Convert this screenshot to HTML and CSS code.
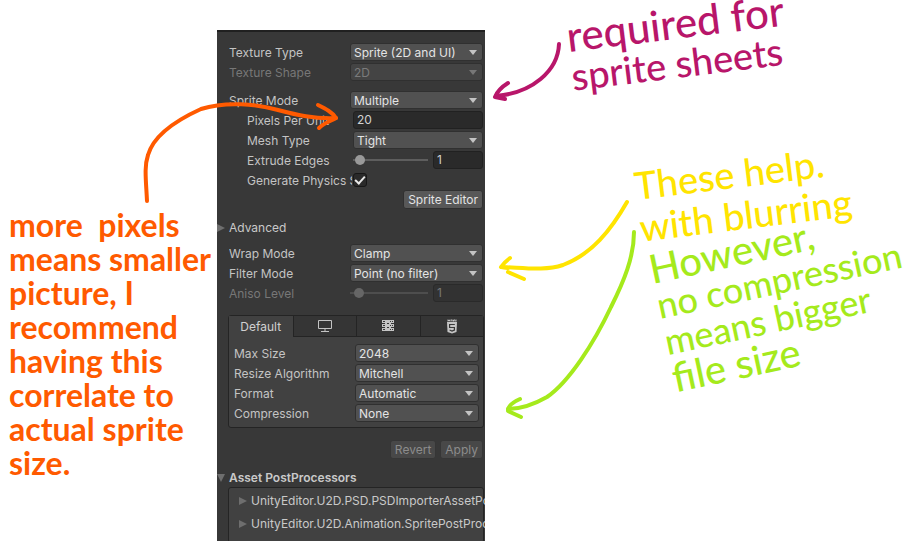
FILE: index.html
```html
<!DOCTYPE html>
<html lang="en">
<head>
<meta charset="utf-8">
<title>Sprite import settings</title>
<link rel="stylesheet" href="styles.css">
</head>
<body>
<main class="sheet">
  <section class="note orange">
    <p>more&nbsp; pixels</p>
    <p>means smaller</p>
    <p>picture, I</p>
    <p>recommend</p>
    <p>having this</p>
    <p>correlate to</p>
    <p>actual sprite</p>
    <p>size.</p>
  </section>

  <form class="panel">
    <div class="group">
      <div class="row"><label for="type">Texture Type</label><span class="pick"><select id="type"><option>Sprite (2D and UI)</option></select></span></div>
      <div class="row off"><label for="shape">Texture Shape</label><span class="pick"><select id="shape" disabled><option>2D</option></select></span></div>
    </div>
    <div class="group">
      <div class="row"><label for="mode">Sprite Mode</label><span class="pick"><select id="mode"><option>Multiple</option></select></span></div>
      <div class="row sub"><label for="ppu">Pixels Per Unit</label><input class="box" id="ppu" type="text" value="20"></div>
      <div class="row sub"><label for="mesh">Mesh Type</label><span class="pick"><select id="mesh"><option>Tight</option></select></span></div>
      <div class="row sub"><label for="edges">Extrude Edges</label><span class="slide"><input id="edges" type="range" min="0" max="32" value="1"><input class="box" type="text" value="1" aria-label="Extrude Edges value"></span></div>
      <div class="row sub"><label for="physics">Generate Physics S</label><input class="tick" id="physics" type="checkbox" checked></div>
      <div class="actions"><button type="button">Sprite Editor</button></div>
    </div>
    <button type="button" class="fold"><svg class="tri" viewBox="0 0 8 10"><path d="M0 1L8 5L0 9Z"/></svg>Advanced</button>
    <div class="group">
      <div class="row"><label for="wrap">Wrap Mode</label><span class="pick"><select id="wrap"><option>Clamp</option></select></span></div>
      <div class="row"><label for="filter">Filter Mode</label><span class="pick"><select id="filter"><option>Point (no filter)</option></select></span></div>
      <div class="row off"><label for="aniso">Aniso Level</label><span class="slide"><input id="aniso" type="range" min="0" max="16" value="1" disabled><input class="box" type="text" value="1" disabled aria-label="Aniso Level value"></span></div>
    </div>
    <div class="platform">
      <div class="tabs">
        <button type="button" class="on">Default</button>
        <button type="button" aria-label="Desktop"><svg width="16" height="14" viewBox="0 0 16 14"><path d="M1.500 1.500H14.500V9.500H1.500ZM8 9.500V12.500M4 12.500H12" fill="none" stroke="#c4c4c4"/></svg></button>
        <button type="button" aria-label="Dedicated server"><svg width="14" height="14" viewBox="0 0 14 14"><path d="M1 1H13V4H1ZM1 5H13V8H1ZM1 9H13V12H1ZM4 4H6V9H4ZM8 4H10V9H8Z" fill="#c4c4c4"/><path d="M2 2.500H4M9 2.500H10M11 2.500H12M2 6.500H4M9 6.500H10M11 6.500H12M2 10.500H4M9 10.500H10M11 10.500H12" stroke="#383838"/></svg></button>
        <button type="button" aria-label="WebGL"><svg width="12" height="15" viewBox="0 0 12 15"><path d="M1 3H11L10.500 13L6 14.500L1.500 13Z" fill="#c4c4c4"/><path d="M8.800 5.500H3.600V8.500H8.400V11L6 12L3.600 11" fill="none" stroke="#383838" stroke-width="1.200"/><path d="M2 .5V2.500M4 .5V2.500M2 1.500H4M5 1H6.500M6 1V2.500M7.500 2.500V1H9V2.500M10 .5V2.500" fill="none" stroke="#c4c4c4"/></svg></button>
      </div>
      <div class="row"><label for="max">Max Size</label><span class="pick"><select id="max"><option>2048</option></select></span></div>
      <div class="row"><label for="resize">Resize Algorithm</label><span class="pick"><select id="resize"><option>Mitchell</option></select></span></div>
      <div class="row"><label for="format">Format</label><span class="pick"><select id="format"><option>Automatic</option></select></span></div>
      <div class="row"><label for="comp">Compression</label><span class="pick"><select id="comp"><option>None</option></select></span></div>
    </div>
    <div class="actions apply"><button type="button" disabled>Revert</button><button type="button" disabled>Apply</button></div>
    <button type="button" class="fold strong"><svg class="tri" viewBox="0 0 8 10"><path d="M0 1H8L4 9Z"/></svg>Asset PostProcessors</button>
    <div class="processors">
      <button type="button" class="fold"><svg class="tri" viewBox="0 0 8 10"><path d="M0 1L8 5L0 9Z"/></svg>UnityEditor.U2D.PSD.PSDImporterAssetPo</button>
      <button type="button" class="fold"><svg class="tri" viewBox="0 0 8 10"><path d="M0 1L8 5L0 9Z"/></svg>UnityEditor.U2D.Animation.SpritePostProc</button>
    </div>
  </form>

  <div class="notes">
    <section class="note magenta"><p class="large">required for</p><p>sprite sheets</p></section>
    <section class="note yellow"><p>These help.</p><p>with blurring</p></section>
    <section class="note green"><p class="large">However,</p><p>no compression</p><p>means bigger</p><p class="large">file size</p></section>
  </div>

  <svg class="arrows" viewBox="0 0 906 541" aria-hidden="true">
    <g stroke="#ff5a00"><path d="M147 201C146 180 144 167 148 155C154 134 179 119 201 109C226 101 257 104 278 110C297 115 314 119 336 118"/><path d="M318 105C326 109 332 112 336 118C331 121 324 123 319 128"/></g>
    <g stroke="#b8166a"><path d="M559 44C558 71 532 93 496 96"/><path d="M508 83C500 88 497 92 495 97L505 99"/></g>
    <g stroke="#ffe400"><path d="M627 202C611 230 592 254 563 265C545 271 526 268 502 267"/><path d="M510 258C506 261 503 264 501 267L508 268M508 272L524 279"/></g>
    <g stroke="#a5ea1c"><path d="M634 232C634 257 624 281 611 307C594 343 569 382 547 397C533 405 521 409 508 409"/><path d="M520 399C513 402 508 406 508 411L521 417"/></g>
  </svg>
</main>
</body>
</html>
```
FILE: styles.css
```css
* { box-sizing: border-box; }
body { margin: 0; background: #fff; font: 12px/18px Inter, "Liberation Sans", sans-serif; }
p { margin: 0; }
button, input, select { font: inherit; color: inherit; margin: 0; }

.sheet {
  position: relative;
  display: grid;
  grid-template-columns: 217fr 268fr 421fr;
  min-height: 100vh;
  overflow: hidden;
}
.sheet > * { min-width: 0; }
.arrows { position: absolute; top: 0; left: 0; width: 100%; pointer-events: none; }
.arrows path { fill: none; stroke-width: 4; stroke-linecap: round; stroke-linejoin: round; }

.note { font: 500 32px/34px Lato, sans-serif; white-space: nowrap; }
.orange { color: #ff5a00; padding: 208px 0 0 9px; font-weight: 700; }
.notes { padding: 16px 0 0 84px; }
.notes .note { transform-origin: 0 50%; }
.magenta { color: #b8166a; font-size: 38px; line-height: 40px; transform: rotate(-7deg); }
.magenta .large { font-size: 42px; }
.yellow { color: #ffe400; margin: 68px 0 0 68px; font-size: 38px; line-height: 42px; transform: rotate(-7deg); }
.green { color: #a5ea1c; margin: 2px 0 0 92px; font-size: 36px; line-height: 37px; transform: rotate(-12deg); }
.green .large { font-size: 40px; }

.panel {
  margin-top: 30px;
  padding: 10px 2px 0 12px;
  overflow: hidden;
  background: #383838;
  border-top: 2px solid #202020;
  color: #c4c4c4;
}
.group { margin-bottom: 8px; }
.row { display: grid; grid-template-columns: 121px 1fr; height: 20px; align-items: center; }
.row label { overflow: hidden; white-space: nowrap; padding-top: 1px; }
.row.sub { grid-template-columns: 105px 1fr; padding-left: 18px; column-gap: 1px; }
.off { color: #777; }

.pick { position: relative; display: block; height: 18px; }
.pick::after {
  content: "";
  position: absolute;
  top: 7px;
  right: 6px;
  border: 4px solid transparent;
  border-top: 5px solid #c4c4c4;
  border-bottom: 0;
  pointer-events: none;
}
.off .pick::after { border-top-color: #777; }
select {
  appearance: none;
  display: block;
  width: 100%;
  height: 18px;
  padding: 0 16px 0 3px;
  background: #515151;
  border: 1px solid #303030;
  border-radius: 3px;
  color: #e4e4e4;
}
select:disabled { background: #444; color: #7b7b7b; opacity: 1; }
.box {
  width: 100%;
  min-width: 0;
  height: 18px;
  padding: 0 3px;
  background: #2a2a2a;
  border: 1px solid #212121;
  border-radius: 3px;
  color: #d2d2d2;
}
.box:disabled { background: #323232; border-color: #2a2a2a; color: #777; }
.slide { display: grid; grid-template-columns: 1fr 50px; column-gap: 5px; align-items: center; }
input[type="range"] { appearance: none; width: 100%; min-width: 0; height: 12px; background: none; }
input[type="range"]::-webkit-slider-runnable-track { height: 2px; background: #5e5e5e; }
input[type="range"]::-webkit-slider-thumb { appearance: none; width: 10px; height: 10px; margin-top: -4px; border-radius: 50%; background: #999; }
input[type="range"]:disabled::-webkit-slider-runnable-track { background: #4e4e4e; }
input[type="range"]:disabled::-webkit-slider-thumb { background: #666; }
.tick {
  appearance: none;
  display: grid;
  place-items: center;
  width: 14px;
  height: 14px;
  background: #2a2a2a;
  border: 1px solid #171717;
  border-radius: 3px;
}
.tick::after { content: ""; width: 8px; height: 4px; margin-bottom: 2px; border: solid #e8e8e8; border-width: 0 0 2px 2px; transform: rotate(-48deg); }

.actions { display: flex; justify-content: flex-end; gap: 4px; }
.actions button {
  height: 19px;
  padding: 0 4px;
  line-height: 17px;
  background: #585858;
  border: 1px solid #303030;
  border-radius: 3px;
  color: #e4e4e4;
}
.actions button:disabled { background: #484848; border-color: #363636; color: #8c8c8c; }
.fold { display: flex; align-items: center; gap: 4px; height: 18px; padding: 0; border: 0; background: none; white-space: nowrap; color: #c9c9c9; margin-left: -12px; }
.fold.strong { font-weight: 600; }
.tri { width: 8px; height: 10px; flex: none; fill: #6e6e6e; }
.group + .fold { margin-top: 10px; margin-bottom: 6px; }

.platform { margin: 12px -1px 0; padding: 0 4px 4px 5px; background: #414141; border: 1px solid #242424; border-radius: 3px; }
.tabs { display: grid; grid-template-columns: repeat(4, 1fr); height: 21px; margin: 0 -4px 6px -5px; }
.tabs button { display: grid; place-items: center; padding: 0; background: #353535; border: solid #242424; border-width: 0 0 1px 1px; color: #d0d0d0; }
.tabs .on { background: #414141; border: 0; }
.apply { margin: 12px 0 10px; }
.processors { margin: 0 -1px; padding: 1px 0 7px 22px; background: #414141; border: 1px solid #242424; border-radius: 3px; }
.processors .fold { height: 23px; }
```
